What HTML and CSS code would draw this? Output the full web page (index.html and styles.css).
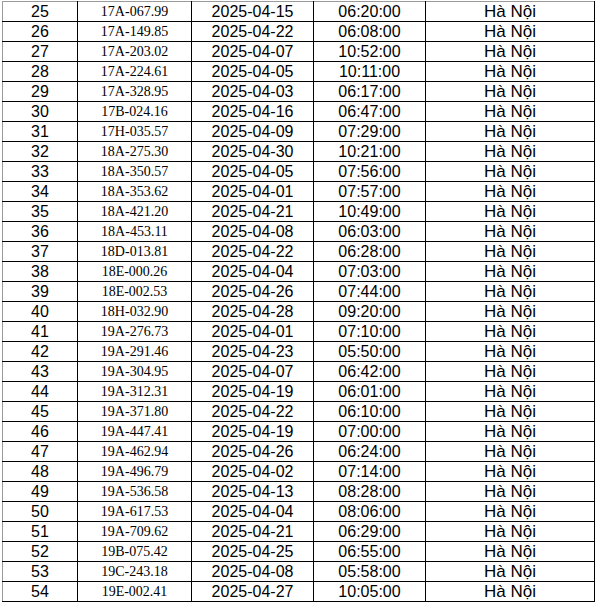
FILE: index.html
```html
<!DOCTYPE html>
<html lang="vi">
<head>
<meta charset="utf-8">
<link rel="stylesheet" href="styles.css">
</head>
<body>
<table class="grid">
<colgroup>
<col class="c-no"><col class="c-plate"><col class="c-date"><col class="c-time"><col class="c-place">
</colgroup>
<tbody>
<tr><td>25</td><td class="plate">17A-067.99</td><td>2025-04-15</td><td>06:20:00</td><td class="place">Hà Nội</td></tr>
<tr><td>26</td><td class="plate">17A-149.85</td><td>2025-04-22</td><td>06:08:00</td><td class="place">Hà Nội</td></tr>
<tr><td>27</td><td class="plate">17A-203.02</td><td>2025-04-07</td><td>10:52:00</td><td class="place">Hà Nội</td></tr>
<tr><td>28</td><td class="plate">17A-224.61</td><td>2025-04-05</td><td>10:11:00</td><td class="place">Hà Nội</td></tr>
<tr><td>29</td><td class="plate">17A-328.95</td><td>2025-04-03</td><td>06:17:00</td><td class="place">Hà Nội</td></tr>
<tr><td>30</td><td class="plate">17B-024.16</td><td>2025-04-16</td><td>06:47:00</td><td class="place">Hà Nội</td></tr>
<tr><td>31</td><td class="plate">17H-035.57</td><td>2025-04-09</td><td>07:29:00</td><td class="place">Hà Nội</td></tr>
<tr><td>32</td><td class="plate">18A-275.30</td><td>2025-04-30</td><td>10:21:00</td><td class="place">Hà Nội</td></tr>
<tr><td>33</td><td class="plate">18A-350.57</td><td>2025-04-05</td><td>07:56:00</td><td class="place">Hà Nội</td></tr>
<tr><td>34</td><td class="plate">18A-353.62</td><td>2025-04-01</td><td>07:57:00</td><td class="place">Hà Nội</td></tr>
<tr><td>35</td><td class="plate">18A-421.20</td><td>2025-04-21</td><td>10:49:00</td><td class="place">Hà Nội</td></tr>
<tr><td>36</td><td class="plate">18A-453.11</td><td>2025-04-08</td><td>06:03:00</td><td class="place">Hà Nội</td></tr>
<tr><td>37</td><td class="plate">18D-013.81</td><td>2025-04-22</td><td>06:28:00</td><td class="place">Hà Nội</td></tr>
<tr><td>38</td><td class="plate">18E-000.26</td><td>2025-04-04</td><td>07:03:00</td><td class="place">Hà Nội</td></tr>
<tr><td>39</td><td class="plate">18E-002.53</td><td>2025-04-26</td><td>07:44:00</td><td class="place">Hà Nội</td></tr>
<tr><td>40</td><td class="plate">18H-032.90</td><td>2025-04-28</td><td>09:20:00</td><td class="place">Hà Nội</td></tr>
<tr><td>41</td><td class="plate">19A-276.73</td><td>2025-04-01</td><td>07:10:00</td><td class="place">Hà Nội</td></tr>
<tr><td>42</td><td class="plate">19A-291.46</td><td>2025-04-23</td><td>05:50:00</td><td class="place">Hà Nội</td></tr>
<tr><td>43</td><td class="plate">19A-304.95</td><td>2025-04-07</td><td>06:42:00</td><td class="place">Hà Nội</td></tr>
<tr><td>44</td><td class="plate">19A-312.31</td><td>2025-04-19</td><td>06:01:00</td><td class="place">Hà Nội</td></tr>
<tr><td>45</td><td class="plate">19A-371.80</td><td>2025-04-22</td><td>06:10:00</td><td class="place">Hà Nội</td></tr>
<tr><td>46</td><td class="plate">19A-447.41</td><td>2025-04-19</td><td>07:00:00</td><td class="place">Hà Nội</td></tr>
<tr><td>47</td><td class="plate">19A-462.94</td><td>2025-04-26</td><td>06:24:00</td><td class="place">Hà Nội</td></tr>
<tr><td>48</td><td class="plate">19A-496.79</td><td>2025-04-02</td><td>07:14:00</td><td class="place">Hà Nội</td></tr>
<tr><td>49</td><td class="plate">19A-536.58</td><td>2025-04-13</td><td>08:28:00</td><td class="place">Hà Nội</td></tr>
<tr><td>50</td><td class="plate">19A-617.53</td><td>2025-04-04</td><td>08:06:00</td><td class="place">Hà Nội</td></tr>
<tr><td>51</td><td class="plate">19A-709.62</td><td>2025-04-21</td><td>06:29:00</td><td class="place">Hà Nội</td></tr>
<tr><td>52</td><td class="plate">19B-075.42</td><td>2025-04-25</td><td>06:55:00</td><td class="place">Hà Nội</td></tr>
<tr><td>53</td><td class="plate">19C-243.18</td><td>2025-04-08</td><td>05:58:00</td><td class="place">Hà Nội</td></tr>
<tr><td>54</td><td class="plate">19E-002.41</td><td>2025-04-27</td><td>10:05:00</td><td class="place">Hà Nội</td></tr>
</tbody>
</table>
</body>
</html>
```
FILE: styles.css
```css
html, body {
  margin: 0;
  padding: 0;
  background: #ffffff;
}

.grid {
  margin: 1px 0 0 2px;
  border-collapse: collapse;
  table-layout: fixed;
  width: 592px;
  font-family: "Liberation Sans", Arial, sans-serif;
  font-size: 16px;
  color: #000;
}

.c-no { width: 75px; }
.c-plate { width: 114px; }
.c-date { width: 122px; }
.c-time { width: 112px; }
.c-place { width: 169px; }

.grid td {
  border: 1px solid #000;
  height: 19px;
  padding: 1px 0 0 0;
  line-height: 18px;
  text-align: center;
  vertical-align: middle;
  white-space: nowrap;
  overflow: hidden;
  box-sizing: border-box;
}

.grid tr:first-child td {
  border-top-color: #9a9a9a;
}

.grid td:first-child {
  border-left-color: #9a9a9a;
}

.grid td.plate {
  font-family: "Liberation Serif", "Times New Roman", serif;
  font-size: 14px;
}

.grid td.place {
  font-size: 17px;
}
```
